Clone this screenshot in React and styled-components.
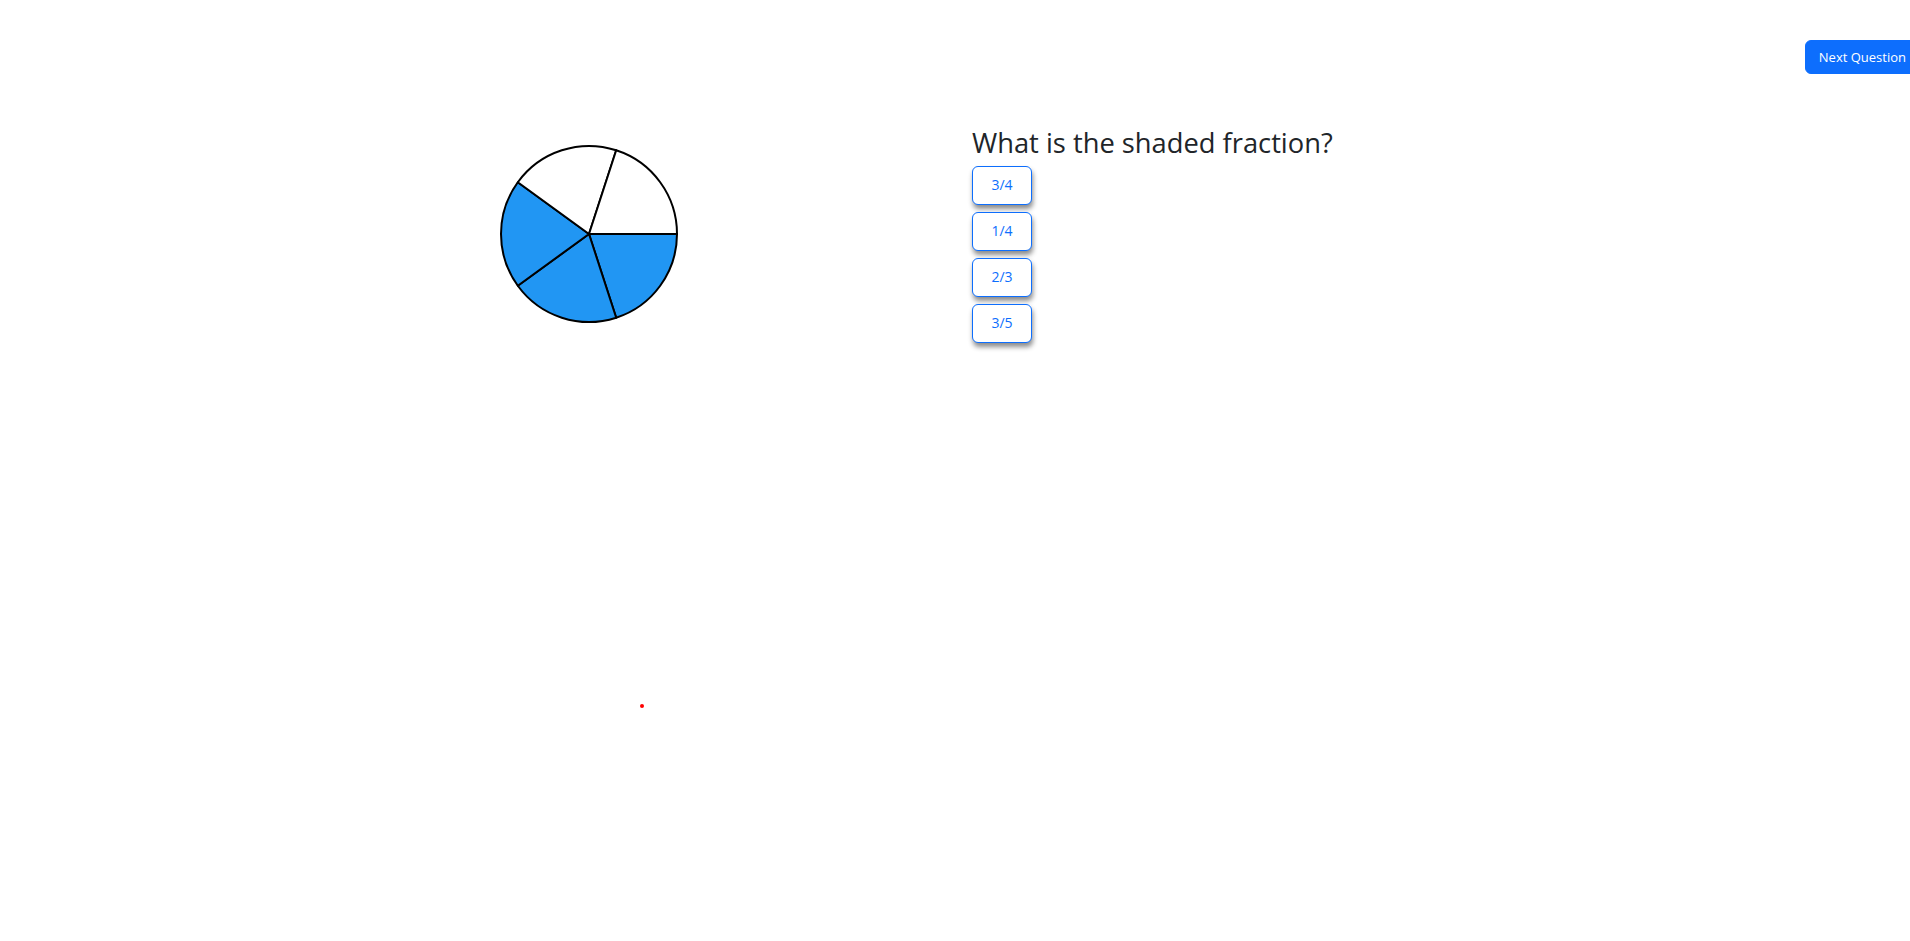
import React from "react";
import styled, { createGlobalStyle } from "styled-components";

const GlobalStyle = createGlobalStyle`
  html, body { margin: 0; padding: 0; background: #fff; }
  body {
    font-family: "Open Sans", "Noto Sans", "Liberation Sans", sans-serif;
    color: #212529;
    overflow: hidden;
  }
  * { box-sizing: border-box; }
`;

const Page = styled.div`
  position: relative;
  width: 100%;
  min-height: 941px;
`;

const TopBar = styled.header`
  display: flex;
  justify-content: flex-end;
  padding-top: 40px;
  margin-right: -10px;
`;

const NextButton = styled.button`
  height: 34px;
  padding: 0 13px;
  border: 1px solid #0d6efd;
  border-radius: 6px;
  background: #0d6efd;
  color: #fff;
  font-family: inherit;
  font-size: 13px;
  line-height: 1;
  cursor: pointer;
`;

const Main = styled.main`
  display: flex;
  align-items: flex-start;
`;

const PieArea = styled.section`
  width: 972px;
  flex: none;
  padding: 70px 0 0 499px;
`;

const QuestionArea = styled.section`
  display: flex;
  flex-direction: column;
  align-items: flex-start;
  padding-top: 53px;
`;

const Title = styled.h3`
  margin: 0 0 6px;
  font-size: 27.3px;
  font-weight: 400;
  line-height: 1.2;
  color: #212529;
`;

const Options = styled.div`
  display: flex;
  flex-direction: column;
  gap: 7px;
`;

const OptionButton = styled.button`
  width: 60px;
  height: 39px;
  padding: 0;
  border: 1px solid #0d6efd;
  border-radius: 6px;
  background: #fff;
  color: #0d6efd;
  font-family: inherit;
  font-size: 14px;
  line-height: 1;
  box-shadow: 1px 4px 5px rgba(0, 0, 0, 0.45);
  cursor: pointer;
`;

const Dot = styled.span`
  position: absolute;
  left: 640px;
  top: 704px;
  width: 4px;
  height: 4px;
  border-radius: 50%;
  background: #f00;
`;

function Pie({ parts = 5, shaded = 3 }) {
  const c = 90;
  const r = 88;
  const pt = (i) => {
    const a = (i / parts) * Math.PI * 2;
    return [c + r * Math.cos(a), c + r * Math.sin(a)];
  };
  const slices = [];
  for (let i = 0; i < parts; i++) {
    const [x1, y1] = pt(i);
    const [x2, y2] = pt(i + 1);
    slices.push(
      <path
        key={i}
        d={`M${c} ${c} L${x1} ${y1} A${r} ${r} 0 0 1 ${x2} ${y2} Z`}
        fill={i < shaded ? "#2196f3" : "#ffffff"}
        stroke="#000"
        strokeWidth="2"
        strokeLinejoin="round"
      />
    );
  }
  return (
    <svg width="180" height="180" viewBox="0 0 180 180">
      {slices}
    </svg>
  );
}

export default function App() {
  const options = ["3/4", "1/4", "2/3", "3/5"];
  return (
    <Page>
      <GlobalStyle />
      <TopBar>
        <NextButton>Next Question</NextButton>
      </TopBar>
      <Main>
        <PieArea>
          <Pie parts={5} shaded={3} />
        </PieArea>
        <QuestionArea>
          <Title>What is the shaded fraction?</Title>
          <Options>
            {options.map((o) => (
              <OptionButton key={o}>{o}</OptionButton>
            ))}
          </Options>
        </QuestionArea>
      </Main>
      <Dot />
    </Page>
  );
}
